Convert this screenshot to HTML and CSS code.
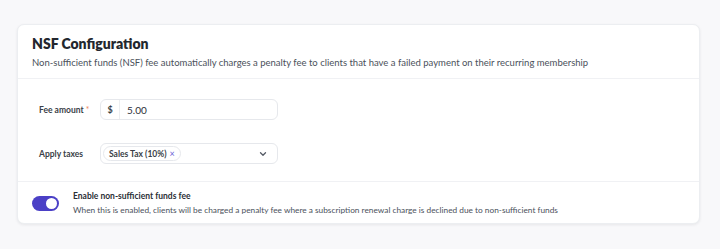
FILE: index.html
```html
<!DOCTYPE html>
<html>
<head>
<meta charset="utf-8">
<link rel="stylesheet" href="styles.css">
</head>
<body>
<div class="card">
  <div class="header">
    <h1 class="title">NSF Configuration</h1>
    <p class="desc">Non-sufficient funds (NSF) fee automatically charges a penalty fee to clients that have a failed payment on their recurring membership</p>
  </div>
  <div class="form">
    <div class="row">
      <label class="label">Fee amount <span class="req">*</span></label>
      <div class="input">
        <span class="prefix">$</span>
        <span class="value">5.00</span>
      </div>
    </div>
    <div class="row">
      <label class="label">Apply taxes</label>
      <div class="input select">
        <span class="chip">Sales Tax (10%) <span class="x">×</span></span>
        <svg class="chev" width="8" height="6" viewBox="0 0 8 6"><path d="M1.5 1.8 L4 4.2 L6.5 1.8" fill="none" stroke="#555b66" stroke-width="1.3" stroke-linecap="round" stroke-linejoin="round"/></svg>
      </div>
    </div>
  </div>
  <div class="footer">
    <span class="toggle"><span class="knob"></span></span>
    <div class="ftext">
      <div class="ftitle">Enable non-sufficient funds fee</div>
      <div class="fdesc">When this is enabled, clients will be charged a penalty fee where a subscription renewal charge is declined due to non-sufficient funds</div>
    </div>
  </div>
</div>
</body>
</html>
```
FILE: styles.css
```css
* { box-sizing: border-box; }
html, body { margin: 0; padding: 0; }
body {
  background: #f8f8fa;
  font-family: Lato, "Noto Sans", sans-serif;
  color: #2b2f36;
  width: 720px;
  height: 249px;
  padding: 24px 20px 0 17px;
}
.card {
  width: 683px;
  background: #fff;
  border: 1px solid #eceef1;
  border-radius: 7px;
  box-shadow: 0 1px 3px rgba(20, 24, 40, 0.08);
}
.header {
  padding: 10px 14px 9px 14px;
  border-bottom: 1px solid #f0f1f4;
}
.title {
  margin: 0;
  font-size: 14px;
  font-weight: 800;
  line-height: 18px;
  color: #23272e;
}
.desc {
  margin: 3px 0 0 0;
  font-size: 9.5px;
  line-height: 13px;
  color: #4b515b;
}
.form {
  padding: 20px 21px 17px 21px;
  display: flex;
  flex-direction: column;
  gap: 23px;
  border-bottom: 1px solid #f0f1f4;
}
.row {
  display: flex;
  align-items: center;
}
.label {
  width: 61px;
  font-size: 8.5px;
  font-weight: 700;
  color: #3a3f47;
}
.req { color: #f08a5d; font-weight: 400; }
.input {
  width: 178px;
  height: 21px;
  border: 1px solid #e6e8ec;
  border-radius: 6px;
  display: flex;
  align-items: center;
}
.prefix {
  width: 19px;
  height: 100%;
  border-right: 1px solid #eceef1;
  display: flex;
  align-items: center;
  justify-content: center;
  font-size: 9px;
  font-weight: 700;
  color: #3a3f47;
}
.value {
  padding-left: 7px;
  font-size: 10px;
  color: #2b2f36;
}
.select {
  padding: 0 10px 0 2px;
  justify-content: space-between;
}
.chip {
  height: 15px;
  border: 1px solid #e6e8ec;
  border-radius: 8px;
  padding: 0 5px 0 5px;
  display: flex;
  align-items: center;
  gap: 3px;
  font-size: 8.5px;
  font-weight: 700;
  color: #3a3f47;
}
.x { color: #6b63d6; font-weight: 400; font-size: 9px; }
.chev { display: block; }
.footer {
  display: flex;
  align-items: center;
  padding: 8px 14px 7px 14px;
  gap: 14px;
}
.toggle {
  width: 27px;
  height: 15px;
  border-radius: 8px;
  background: #4b40c6;
  position: relative;
  flex: none;
}
.knob {
  position: absolute;
  right: 2px;
  top: 2px;
  width: 11px;
  height: 11px;
  border-radius: 50%;
  background: #fff;
}
.ftitle {
  font-size: 8.5px;
  font-weight: 700;
  line-height: 12px;
  color: #2b2f36;
}
.fdesc {
  margin-top: 2px;
  font-size: 8.3px;
  line-height: 12px;
  color: #4b515b;
}
```
